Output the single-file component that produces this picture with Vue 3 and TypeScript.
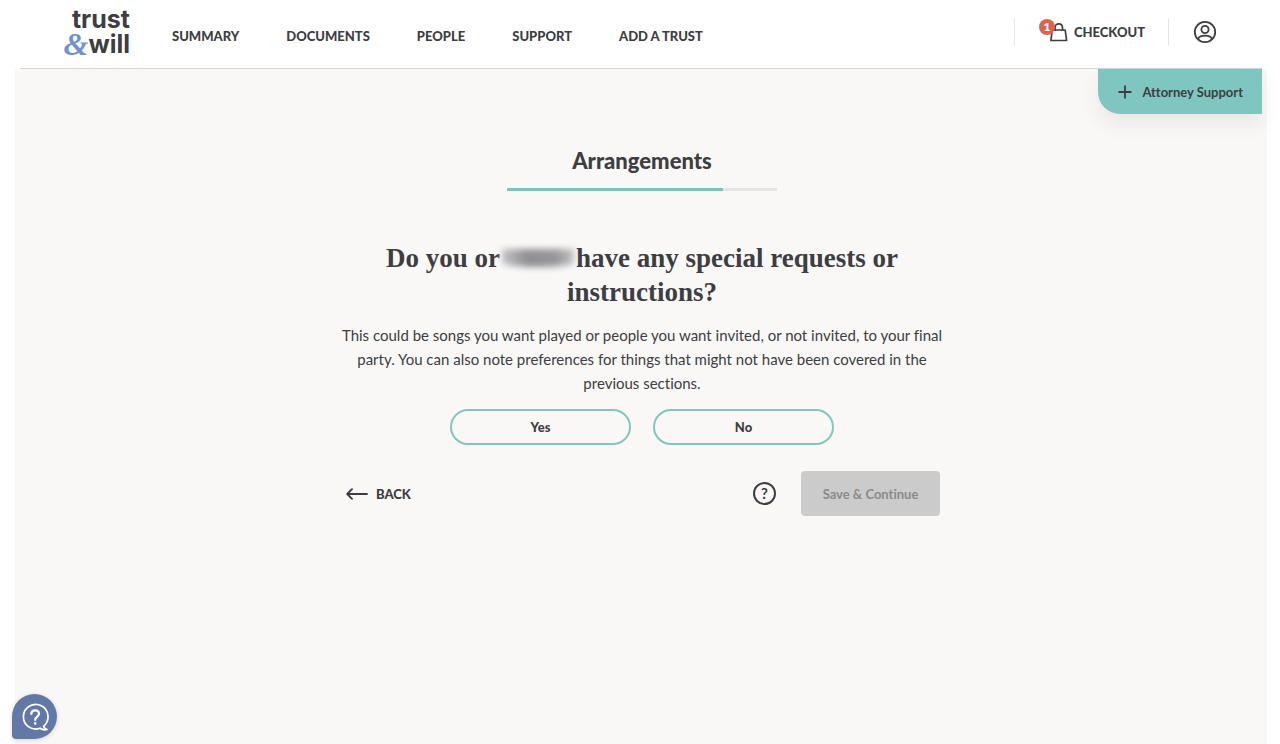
<script setup lang="ts">
import { ref } from 'vue'

const links: string[] = ['SUMMARY', 'DOCUMENTS', 'PEOPLE', 'SUPPORT', 'ADD A TRUST']
const answers: string[] = ['Yes', 'No']
const answer = ref<string>('')
const progress = ref<number>(80)
</script>

<template>
  <div class="page">
    <header class="header">
      <a class="logo" href="#" aria-label="trust &amp; will">
        <span class="logo-line">trust</span>
        <span class="logo-line"><span class="amp">&amp;</span>will</span>
      </a>
      <nav class="nav">
        <a v-for="link in links" :key="link" href="#">{{ link }}</a>
      </nav>
      <div class="account">
        <a class="checkout" href="#">
          <span class="bag">
            <svg width="18" height="20" viewBox="0 0 18 20" fill="none" stroke="#3d3d42" stroke-width="1.7">
              <path d="M2.200 8H15.200L16.600 18.500H0.900Z" stroke-linejoin="round" />
              <path d="M5 9V6C5 0.500 12.500 0.500 12.500 6V9" />
            </svg>
            <span class="badge">1</span>
          </span>
          <span>CHECKOUT</span>
        </a>
        <button class="profile" type="button" aria-label="Account">
          <svg width="24" height="24" viewBox="0 0 24 24" fill="none" stroke="#3d3d42" stroke-width="1.8">
            <circle cx="12" cy="12" r="10.200" />
            <circle cx="12" cy="9.500" r="3.600" />
            <path d="M5 19C6.500 14.500 17.500 14.500 19 19" />
          </svg>
        </button>
      </div>
    </header>

    <main class="main">
      <button class="attorney" type="button">
        <svg width="14" height="14" viewBox="0 0 14 14" stroke="#3d3d42" stroke-width="1.8">
          <path d="M7 0.500V13.500M0.500 7H13.500" />
        </svg>
        Attorney Support
      </button>

      <section class="content">
        <h2 class="step">Arrangements</h2>
        <div class="track"><div class="fill" :style="{ width: progress + '%' }"></div></div>
        <h1 class="question">Do you or<span class="redacted"></span>have any special requests or instructions?</h1>
        <p class="hint">
          This could be songs you want played or people you want invited, or not invited, to your final
          party. You can also note preferences for things that might not have been covered in the
          previous sections.
        </p>
        <div class="answers">
          <button v-for="a in answers" :key="a" type="button" class="answer" @click="answer = a">{{ a }}</button>
        </div>
        <div class="actions">
          <a class="back" href="#">
            <svg width="22" height="12" viewBox="0 0 22 12" fill="none" stroke="#3d3d42" stroke-width="1.9" stroke-linecap="round" stroke-linejoin="round">
              <path d="M21 6H1.200M6 1.200L1.200 6L6 10.800" />
            </svg>
            BACK
          </a>
          <button class="help" type="button" aria-label="Help">?</button>
          <button class="save" type="button" :disabled="!answer">Save &amp; Continue</button>
        </div>
      </section>
    </main>

    <button class="chat" type="button" aria-label="Open chat">
      <svg width="28" height="28" viewBox="0 0 28 28" fill="none" stroke="#fff" stroke-width="1.700" stroke-linecap="round" stroke-linejoin="round">
        <path d="M22.500 23.300A12.300 12.300 0 1 0 19 25.300C21 26.700 24 27.200 26 26.500C24 25.700 22.800 24.700 22.500 23.300" />
        <path d="M10.300 11C10.300 6.200 18 6.200 18 10.800C18 13.700 14.200 13.500 14.200 17" stroke-width="2.200" />
        <circle cx="14.200" cy="20.400" r="0.600" stroke-width="1.400" />
      </svg>
    </button>
  </div>
</template>

<style>
body {
  margin: 0;
  background: #fff;
}
</style>

<style scoped>
.page {
  display: flex;
  flex-direction: column;
  min-height: 100vh;
  font-family: Lato, "Liberation Sans", sans-serif;
  font-variant-ligatures: none;
  color: #3d3d42;
}
* {
  box-sizing: border-box;
}
a {
  color: inherit;
  text-decoration: none;
}
button {
  font-family: inherit;
  font-variant-ligatures: none;
  color: inherit;
  padding: 0;
  border: 0;
  background: none;
  cursor: pointer;
}
svg {
  display: block;
  flex: none;
}
.header {
  display: flex;
  align-items: center;
  height: 69px;
  margin: 0 18px 0 20px;
  padding: 0 45px 0 44px;
  border-bottom: 1px solid #d6d6d5;
}
.logo {
  display: flex;
  flex-direction: column;
  align-items: flex-end;
  width: 66px;
  margin-bottom: 4px;
  font: 700 25px/25px Inter, sans-serif;
}
.logo-line {
  display: flex;
  align-items: center;
}
.amp {
  font: italic 700 32px/25px "Liberation Serif", serif;
  color: #7092cc;
}
.nav {
  display: flex;
  gap: 47px;
  margin: 4px 0 0 42px;
  font-size: 13px;
  font-weight: 900;
}
.account {
  display: flex;
  align-items: center;
  margin: 0 0 4px auto;
}
.checkout {
  display: flex;
  align-items: center;
  gap: 6px;
  height: 28px;
  padding: 0 23px 0 35px;
  border: solid #e6e6e6;
  border-width: 0 1px;
  font-size: 13px;
  font-weight: 900;
}
.bag {
  position: relative;
}
.badge {
  position: absolute;
  top: -3px;
  left: -11px;
  width: 16px;
  height: 16px;
  border-radius: 50%;
  background: #dc6350;
  color: #fff;
  font-size: 12px;
  line-height: 16px;
  text-align: center;
}
.profile {
  margin-left: 24px;
}
.main {
  flex: 1;
  display: flex;
  flex-direction: column;
  margin: 0 13px 0 15px;
  background: #f9f8f7;
}
.attorney {
  display: flex;
  align-items: center;
  align-self: flex-end;
  gap: 10px;
  height: 45px;
  margin-right: 5px;
  padding: 0 19px 0 20px;
  border-radius: 0 0 0 22px;
  background: #7fc6c1;
  box-shadow: 0 10px 20px rgba(60, 50, 40, 0.08);
  font-size: 13px;
  font-weight: 700;
}
.content {
  display: flex;
  flex-direction: column;
  align-items: center;
  width: 100%;
  max-width: 608px;
  margin: 0 auto;
  padding: 32px 0 32px 2px;
}
.step {
  margin: 0;
  font-size: 22px;
  line-height: 30px;
  font-weight: 900;
}
.track {
  width: 270px;
  height: 3px;
  margin-top: 12px;
  background: #e6e5e4;
}
.fill {
  height: 3px;
  background: #7bc3bd;
}
.question {
  margin: 50px 0 0;
  font: 700 27px/34px "Liberation Serif", serif;
  text-align: center;
}
.redacted {
  display: inline-block;
  width: 72px;
  height: 18px;
  margin: 0 2px;
  border-radius: 0 0 50% 50% / 0 0 4px 4px;
  background: linear-gradient(90deg, #c4c4c6, #8f8f94 35%, #97979b 75%, #c4c4c6);
  filter: blur(3px);
}
.hint {
  margin: 14px 0 0;
  font-size: 15px;
  line-height: 24px;
  text-align: center;
}
.answers {
  display: flex;
  gap: 22px;
  margin-top: 14px;
}
.answer {
  width: 181px;
  height: 36px;
  border: 2px solid #84c6bd;
  border-radius: 18px;
  font-size: 13px;
  font-weight: 900;
}
.actions {
  display: flex;
  align-items: center;
  width: 100%;
  max-width: 596px;
  margin-top: 26px;
}
.back {
  display: flex;
  align-items: center;
  gap: 8px;
  margin-right: auto;
  padding-left: 2px;
  font-size: 13px;
  font-weight: 900;
}
.help {
  width: 23px;
  height: 23px;
  border: 2px solid #3d3d42;
  border-radius: 50%;
  font-size: 15px;
  line-height: 19px;
  font-weight: 700;
}
.save {
  width: 139px;
  height: 45px;
  margin-left: 25px;
  border-radius: 4px;
  background: #cbcbcb;
  color: #8a8a8a;
  font-size: 13px;
  font-weight: 700;
}
.chat {
  position: fixed;
  left: 12px;
  bottom: 5px;
  display: flex;
  align-items: center;
  justify-content: center;
  width: 45px;
  height: 45px;
  border-radius: 50% 50% 50% 4px;
  background: #6279a8;
  box-shadow: 0 1px 5px rgba(0, 0, 0, 0.15);
}
</style>
